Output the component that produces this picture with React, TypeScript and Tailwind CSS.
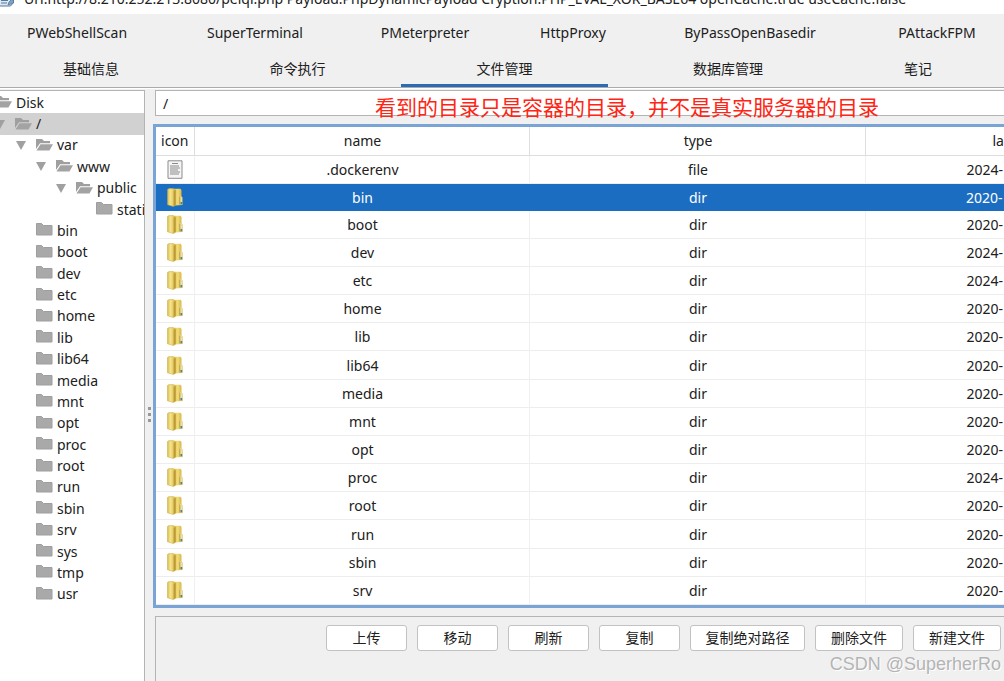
import React from "react";

const primaryTabs = [
  { label: "PWebShellScan", width: "w-[154px]" },
  { label: "SuperTerminal", width: "w-[202px]" },
  { label: "PMeterpreter", width: "w-[138px]" },
  { label: "HttpProxy", width: "w-[158px]" },
  { label: "ByPassOpenBasedir", width: "w-[196px]" },
  { label: "PAttackFPM", width: "w-[178px]" },
];

const secondaryTabs = [
  { label: "基础信息", width: "w-[194px] pr-3" },
  { label: "命令执行", width: "w-[207px]" },
  { label: "文件管理", width: "w-[207px]", active: true },
  { label: "数据库管理", width: "w-[240px]" },
  { label: "笔记", width: "w-[140px]" },
];

type TreeNode = { label: string; pad: string; open?: boolean; arrow?: boolean; selected?: boolean };

const tree: TreeNode[] = [
  { label: "Disk", pad: "-ml-[5px]", open: true },
  { label: "/", pad: "-ml-[5px]", open: true, arrow: true, selected: true },
  { label: "var", pad: "ml-4", open: true, arrow: true },
  { label: "www", pad: "ml-9", open: true, arrow: true },
  { label: "public", pad: "ml-14", open: true, arrow: true },
  { label: "static", pad: "ml-24" },
  ...[
    "bin", "boot", "dev", "etc", "home", "lib", "lib64", "media", "mnt",
    "opt", "proc", "root", "run", "sbin", "srv", "sys", "tmp", "usr",
  ].map((label) => ({ label, pad: "ml-9" })),
];

const files = [
  { name: ".dockerenv", type: "file", modified: "2024-" },
  { name: "bin", type: "dir", modified: "2020-", selected: true },
  { name: "boot", type: "dir", modified: "2020-" },
  { name: "dev", type: "dir", modified: "2024-" },
  { name: "etc", type: "dir", modified: "2024-" },
  { name: "home", type: "dir", modified: "2020-" },
  { name: "lib", type: "dir", modified: "2020-" },
  { name: "lib64", type: "dir", modified: "2020-" },
  { name: "media", type: "dir", modified: "2020-" },
  { name: "mnt", type: "dir", modified: "2020-" },
  { name: "opt", type: "dir", modified: "2020-" },
  { name: "proc", type: "dir", modified: "2024-" },
  { name: "root", type: "dir", modified: "2020-" },
  { name: "run", type: "dir", modified: "2020-" },
  { name: "sbin", type: "dir", modified: "2020-" },
  { name: "srv", type: "dir", modified: "2020-" },
];

const actions = [
  { label: "上传", width: "w-[81px]" },
  { label: "移动", width: "w-[81px]" },
  { label: "刷新", width: "w-[81px]" },
  { label: "复制", width: "w-[81px]" },
  { label: "复制绝对路径", width: "w-[115px]" },
  { label: "删除文件", width: "w-[88px]" },
  { label: "新建文件", width: "w-[88px]" },
];

function TreeFolder({ open }: { open?: boolean }) {
  return open ? (
    <svg viewBox="0 0 17 13" className="mb-[2px] h-[13px] w-[17px] shrink-0" aria-hidden="true">
      <path d="M0 1h6l2 2h6v2.200H4L0 11z" fill="#9f9f9f" />
      <path d="M4.500 6.200H17L13.500 12.500H.5z" fill="#a3a3a3" />
    </svg>
  ) : (
    <svg viewBox="0 0 17 13" className="mb-[2px] h-[13px] w-[17px] shrink-0" aria-hidden="true">
      <path d="M.5.5h5l2 2h8.500v9.500H.5z" fill="#a9a9a9" stroke="#9e9e9e" />
    </svg>
  );
}

function FolderIcon() {
  return (
    <svg viewBox="0 0 16 19" className="mx-auto h-[19px] w-4" aria-hidden="true">
      <defs>
        <linearGradient id="folder-front" x1="0" x2="1" y1="0" y2="0">
          <stop offset="0" stopColor="#d9bb4c" />
          <stop offset=".35" stopColor="#f5e48f" />
          <stop offset="1" stopColor="#d9b845" />
        </linearGradient>
        <linearGradient id="folder-back" x1="0" x2="1" y1="0" y2="0">
          <stop offset="0" stopColor="#dcbf4d" />
          <stop offset=".5" stopColor="#f1db78" />
          <stop offset="1" stopColor="#d0ad3e" />
        </linearGradient>
      </defs>
      <path d="M6 .8h7.500L14.500 2v6.500l1 1V17L8 17.500z" fill="url(#folder-back)" />
      <path d="M.5 1.500L2 .6h4L8.500 2v15L6.500 18.600.5 16.800z" fill="url(#folder-front)" stroke="#c7a845" strokeWidth=".5" />
      <path d="M6.600 2.800L8.600 2v15l-2 1.500z" fill="#bd9b38" />
      <path d="M12.500 9.500l1.200-1.500 1.500 1.500v7h-2.700z" fill="#ecdf9f" />
      <path d="M12.800 8.800v7.700" stroke="#b08d2e" strokeWidth=".8" />
      <path d="M13.500 14h1.700v2.300h-1.700z" fill="#4d8585" />
    </svg>
  );
}

function FileIcon() {
  return (
    <svg viewBox="0 0 16 19" className="mx-auto h-[19px] w-4" aria-hidden="true">
      <path d="M1 .8h14v17.500H1z" fill="#f5f5f5" stroke="#8b8b8b" />
      <path d="M5 3.500h6M3 6h9M3 8h10M3 10h8M3 12h10M3 14h9" stroke="#8a8a8a" />
    </svg>
  );
}

function AppIcon() {
  return (
    <svg viewBox="0 0 16 18" className="mb-[2px] h-[18px] w-4 shrink-0" aria-hidden="true">
      <path d="M-2 1h15.500v12.500l-3 3.500H-2z" fill="#dce9f4" stroke="#56789b" />
      <path d="M1 11.500h7M1 14h6" stroke="#527ba2" />
      <path d="M8 16l1-3 3-3 1.500 2v2z" fill="#7fa3c6" stroke="#56789b" strokeWidth=".8" />
    </svg>
  );
}

export default function App() {
  return (
    <div className="flex h-screen flex-col overflow-hidden bg-[#f0f0f0] font-['Noto_Sans','Noto_Sans_CJK_SC',sans-serif] text-sm text-[#202020]">
      <header className="flex h-[14px] shrink-0 items-end gap-2 overflow-hidden bg-white pb-[5px] whitespace-nowrap">
        <AppIcon />
        <h1 className="text-sm leading-5">
          Url:http://8.210.252.213:8080/peiqi.php Payload:PhpDynamicPayload Cryption:PHP_EVAL_XOR_BASE64 openCache:true useCache:false
        </h1>
      </header>

      <nav className="shrink-0 overflow-hidden border-b border-[#ababab]">
        <div className="flex h-9 w-full">
          {primaryTabs.map((t) => (
            <button key={t.label} className={`${t.width} shrink-0 pt-[2px]`}>{t.label}</button>
          ))}
        </div>
        <div className="flex h-[37px] w-full">
          {secondaryTabs.map((t) => (
            <button
              key={t.label}
              className={`${t.width} shrink-0 border-b-[3px] pt-[3px] ${t.active ? "border-[#2b6bb5]" : "border-transparent"}`}
            >
              {t.label}
            </button>
          ))}
        </div>
      </nav>

      <main className="flex min-h-0 flex-1 border-t border-white pt-px">
        <aside className="w-[145px] shrink-0 overflow-hidden border-t border-r border-[#b4b4b4] bg-white">
          <ul className="grid h-[514px] auto-rows-fr pt-px">
            {tree.map((n) => (
              <li key={n.label} className={`flex items-center ${n.selected ? "bg-[#d1d1d1]" : ""}`}>
                <div className={`flex items-center leading-5 whitespace-nowrap ${n.pad}`}>
                  {n.arrow && (
                    <svg viewBox="0 0 10 9" className="mr-[10px] h-[9px] w-[10px] shrink-0" aria-hidden="true">
                      <path d="M0 0h10L5 9z" fill="#a0a0a0" />
                    </svg>
                  )}
                  <TreeFolder open={n.open} />
                  <span className="ml-1">{n.label}</span>
                </div>
              </li>
            ))}
          </ul>
        </aside>

        <div className="flex w-2 shrink-0 flex-col items-center gap-[3px] pt-[317px]" aria-hidden="true">
          <i className="size-[3px] bg-[#999]" />
          <i className="size-[3px] bg-[#999]" />
          <i className="size-[3px] bg-[#999]" />
        </div>

        <section className="flex min-w-0 flex-1 flex-col overflow-hidden">
          <div className="relative ml-[2px]">
            <input
              aria-label="Path"
              defaultValue="/"
              className="block h-[26px] w-full border border-r-0 border-[#b4b4b4] bg-white px-[7px] outline-none"
            />
            <p className="pointer-events-none absolute top-0 left-[220px] text-[21px] leading-[34px] whitespace-nowrap text-[#ff2413]">
              看到的目录只是容器的目录，并不是真实服务器的目录
            </p>
          </div>

          <div className="mt-2 shrink-0 overflow-hidden border-[3px] border-r-0 border-[#7ba4d6] bg-white">
            <table className="h-[478px] w-[1045px] table-fixed border-collapse text-center">
              <colgroup>
                <col className="w-[38px]" />
                <col className="w-[335px]" />
                <col className="w-[336px]" />
                <col className="w-[336px]" />
              </colgroup>
              <thead>
                <tr className="h-7 border-b border-[#dedede]">
                  <th className="border-r border-[#dedede] font-normal">icon</th>
                  <th className="border-r border-[#dedede] pl-[2px] font-normal">name</th>
                  <th className="border-r border-[#dedede] pl-[2px] font-normal">type</th>
                  <th className="pl-[127px] text-left font-normal">lastModified</th>
                </tr>
              </thead>
              <tbody>
                {files.map((f) => {
                  const line = f.selected ? "" : "border-r border-[#f0f0f0]";
                  return (
                    <tr
                      key={f.name}
                      className={f.selected ? "bg-[#1b6dc1] text-white" : "border-b border-[#ededed]"}
                    >
                      <td className={line}>{f.type === "file" ? <FileIcon /> : <FolderIcon />}</td>
                      <td className={`pt-px pl-[2px] ${line}`}>{f.name}</td>
                      <td className={`pt-px pl-[2px] ${line}`}>{f.type}</td>
                      <td className="pt-px pl-[101px] text-left">{f.modified}</td>
                    </tr>
                  );
                })}
              </tbody>
            </table>
          </div>

          <footer className="mt-2 ml-[2px] flex-1 border-t border-l border-[#b4b4b4] pt-2 pl-[170px]">
            <div className="flex gap-[10px]">
              {actions.map((a) => (
                <button
                  key={a.label}
                  className={`${a.width} h-[26px] shrink-0 rounded-[3px] border border-[#c2c2c2] bg-white text-sm`}
                >
                  {a.label}
                </button>
              ))}
            </div>
          </footer>
        </section>
      </main>

      <p className="pointer-events-none absolute right-[3px] bottom-[5px] font-['Liberation_Sans',sans-serif] text-lg leading-6 text-[#b4b4b4] [text-shadow:1px_1px_0_#fff]">
        CSDN @SuperherRo
      </p>
    </div>
  );
}
